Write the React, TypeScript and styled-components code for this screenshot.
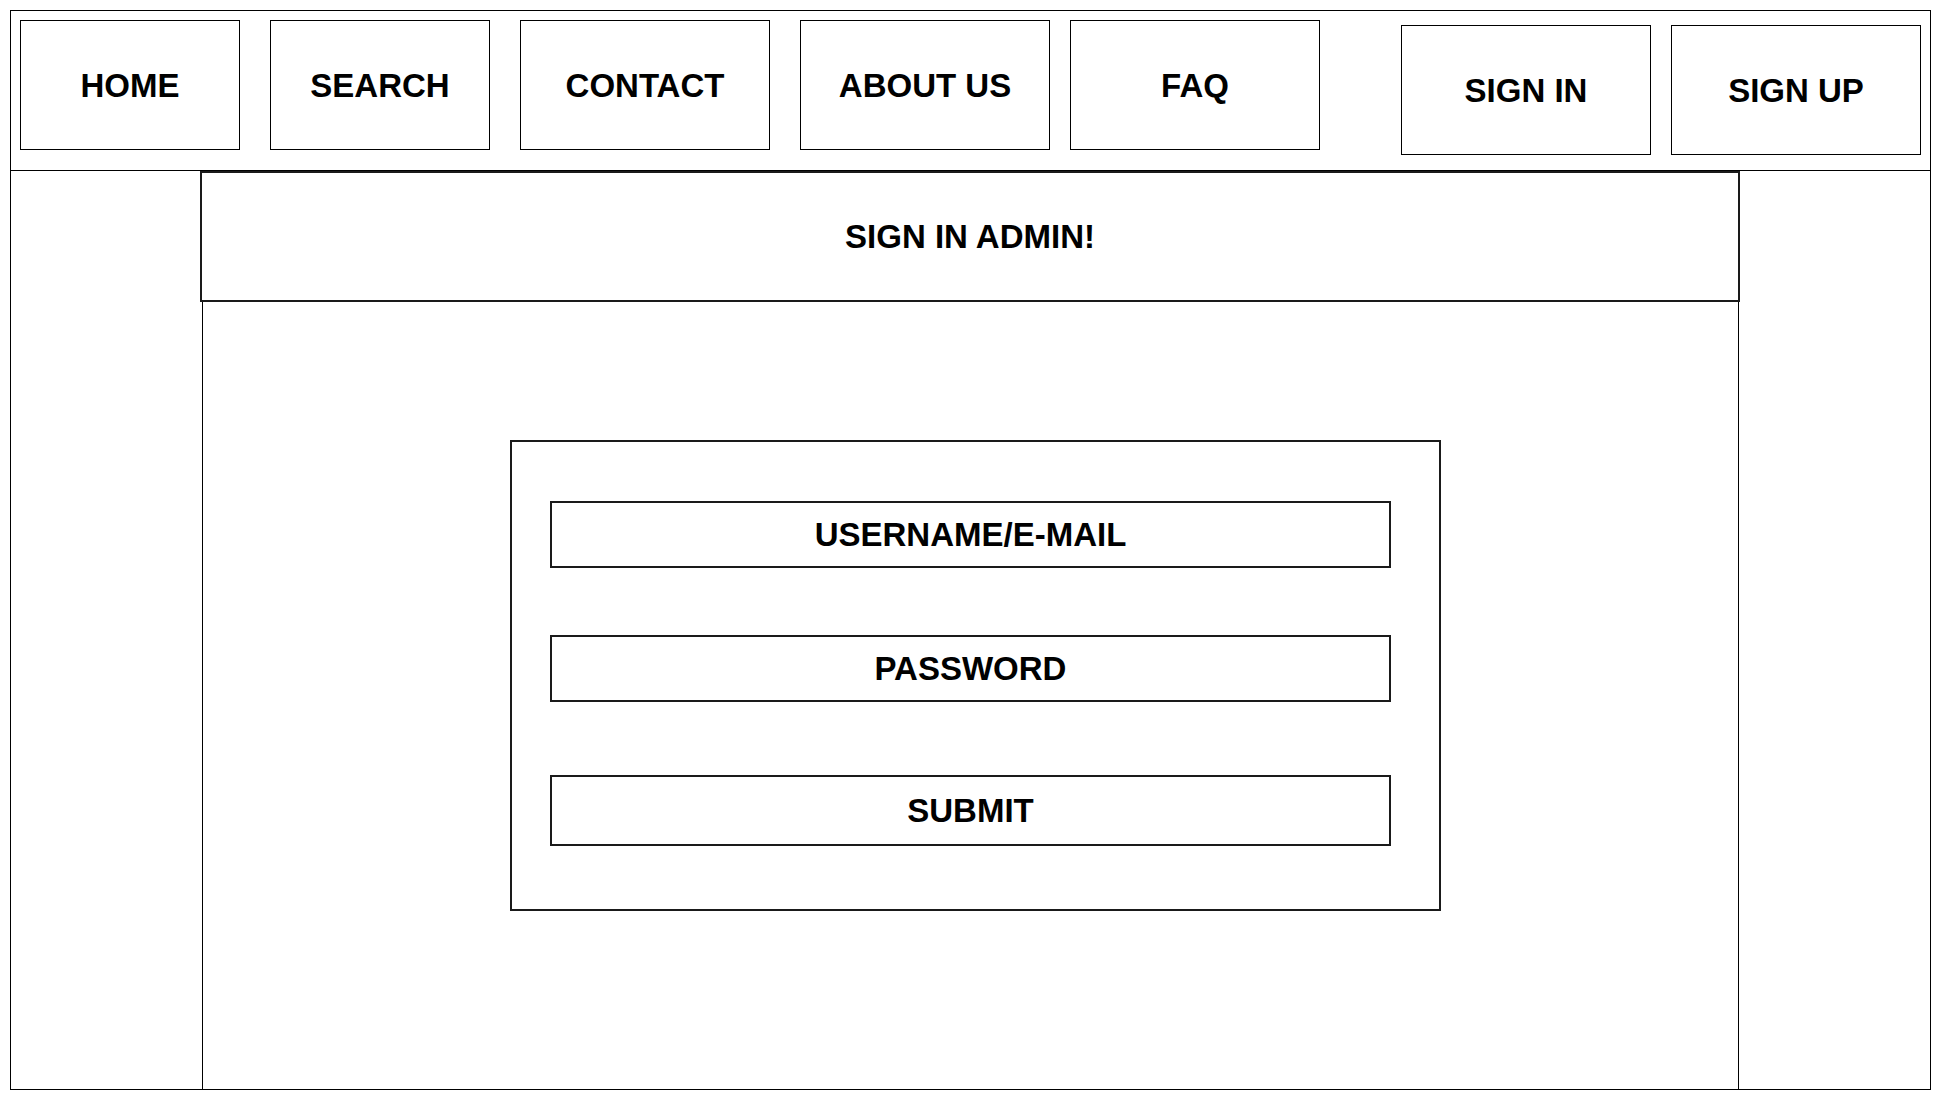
import styled, { createGlobalStyle } from "styled-components";

const GlobalStyle = createGlobalStyle`
  * {
    box-sizing: border-box;
  }
  body {
    margin: 0;
    background: #ffffff;
    font-family: "Liberation Sans", Arial, sans-serif;
    color: #000000;
  }
`;

const leftLinks = [
  { label: "HOME", width: 220, gap: 0 },
  { label: "SEARCH", width: 220, gap: 30 },
  { label: "CONTACT", width: 250, gap: 30 },
  { label: "ABOUT US", width: 250, gap: 30 },
  { label: "FAQ", width: 250, gap: 20 },
];

const rightLinks = [
  { label: "SIGN IN", gap: 0 },
  { label: "SIGN UP", gap: 20 },
];

/* -------- Frame -------- */
const Frame = styled.div`
  margin: 10px;
  width: 1921px;
  height: 1080px;
  border: 1px solid #000;
  display: flex;
  flex-direction: column;
`;

const Header = styled.header`
  height: 160px;
  flex-shrink: 0;
  display: flex;
  align-items: flex-start;
  padding: 9px 9px 0 9px;
  border-bottom: 1px solid #000;
`;

const NavGroup = styled.nav<{ $offset?: number }>`
  display: flex;
  margin-top: ${(p) => p.$offset ?? 0}px;
  &:last-child {
    margin-left: auto;
  }
`;

const NavBox = styled.a<{ $width?: number; $gap?: number }>`
  width: ${(p) => p.$width ?? 250}px;
  height: 130px;
  margin-left: ${(p) => p.$gap ?? 0}px;
  padding-top: 2px;
  border: 1px solid #000;
  display: flex;
  align-items: center;
  justify-content: center;
  font-size: 33px;
  font-weight: 700;
  color: #000;
  text-decoration: none;
  cursor: pointer;
`;

/* -------- Main -------- */
const Main = styled.main`
  flex: 1;
  display: flex;
  padding: 0 189px;
`;

const Panel = styled.section`
  width: 1540px;
  display: flex;
  flex-direction: column;
`;

const TitleBar = styled.h1`
  margin: 0;
  height: 131px;
  flex-shrink: 0;
  border: 2px solid #1a1a1a;
  display: flex;
  align-items: center;
  justify-content: center;
  font-size: 33px;
  font-weight: 700;
`;

const Column = styled.div`
  flex: 1;
  margin: 0 1px 0 2px;
  border-left: 1px solid #000;
  border-right: 1px solid #000;
  display: flex;
  justify-content: center;
  align-items: flex-start;
  padding: 138px 0 0 10px;
`;

const FormBox = styled.form`
  width: 931px;
  height: 471px;
  border: 2px solid #1a1a1a;
  display: flex;
  flex-direction: column;
  padding: 59px 48px 0 38px;
`;

const Field = styled.div<{ $height?: number; $top?: number }>`
  width: 841px;
  height: ${(p) => p.$height ?? 67}px;
  margin-top: ${(p) => p.$top ?? 0}px;
  border: 2px solid #1a1a1a;
  display: flex;
  align-items: center;
  justify-content: center;
  font-size: 33px;
  font-weight: 700;
`;

const SubmitButton = styled(Field).attrs({ as: "button", type: "button" })`
  background: #fff;
  color: #000;
  font-family: inherit;
  padding: 0;
  cursor: pointer;
`;

export default function App() {
  return (
    <>
      <GlobalStyle />
      <Frame>
        <Header>
          <NavGroup>
            {leftLinks.map((l) => (
              <NavBox key={l.label} $width={l.width} $gap={l.gap}>
                {l.label}
              </NavBox>
            ))}
          </NavGroup>
          <NavGroup $offset={5}>
            {rightLinks.map((l) => (
              <NavBox key={l.label} $gap={l.gap}>
                {l.label}
              </NavBox>
            ))}
          </NavGroup>
        </Header>

        <Main>
          <Panel>
            <TitleBar>SIGN IN ADMIN!</TitleBar>
            <Column>
              <FormBox onSubmit={(e) => e.preventDefault()}>
                <Field>USERNAME/E-MAIL</Field>
                <Field $top={67}>PASSWORD</Field>
                <SubmitButton $top={73} $height={71}>
                  SUBMIT
                </SubmitButton>
              </FormBox>
            </Column>
          </Panel>
        </Main>
      </Frame>
    </>
  );
}
